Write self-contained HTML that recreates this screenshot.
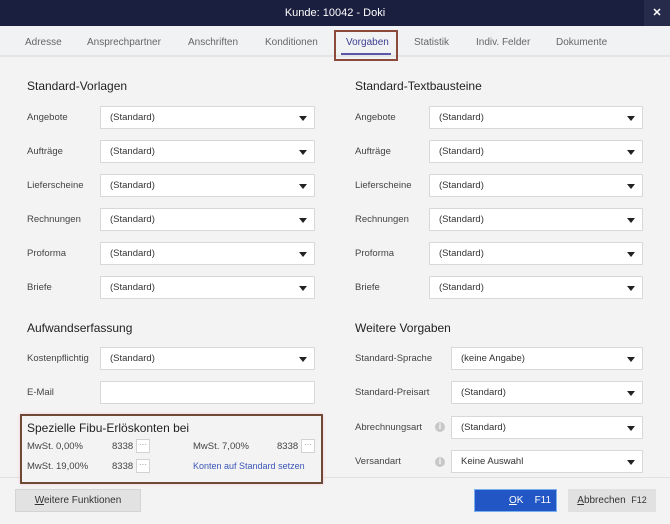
<!DOCTYPE html>
<html><head><meta charset="utf-8"><style>
*{box-sizing:border-box;margin:0;padding:0}
body{width:670px;height:524px;overflow:hidden;background:#f3f3f3;font-family:"Liberation Sans",sans-serif;font-size:10px;color:#333;position:relative}
.a{position:absolute;white-space:nowrap}
.title{left:0;top:0;width:670px;height:26px;background:#1b1f3f;color:#fff;font-size:11px;text-align:center;line-height:26px}
.x{right:0;top:0;width:26px;height:26px;background:#262b4c;color:#fff;text-align:center;line-height:26px;font-size:11px;font-weight:bold}
.tabs{left:0;top:26px;width:670px;height:31px;background:#f1f2f3;border-bottom:2px solid #e3e5e6}
.tab{top:37px;font-size:10px;color:#666}
.h{font-size:12px;color:#222}
.lbl{font-size:9.5px;color:#444}
.sel{height:23px;background:#fff;border:1px solid #d8d8d8;font-size:9.5px;color:#333;padding-left:9px;line-height:21px}
.sel:after{content:"";position:absolute;right:7px;top:9px;border-left:4px solid transparent;border-right:4px solid transparent;border-top:5px solid #222}
.info{width:10px;height:10px;border-radius:50%;background:#c8c8c8;color:#fff;font-size:8px;text-align:center;line-height:10px;font-weight:bold}
.dots{width:14px;height:14px;background:#fff;border:1px solid #d3d3d3;font-size:8px;color:#888;text-align:center;line-height:9px}
.foot{left:0;top:477px;width:670px;height:47px;background:#f3f3f3;border-top:1px solid #e0e0e0}
</style></head><body>
<div class="a title">Kunde: 10042 - Doki</div>
<div class="a x">✕</div>
<div class="a tabs"></div>
<div class="a tab" style="left:25px">Adresse</div>
<div class="a tab" style="left:87px">Ansprechpartner</div>
<div class="a tab" style="left:188px">Anschriften</div>
<div class="a tab" style="left:265px">Konditionen</div>
<div class="a tab" style="left:346px;color:#3b3f8f">Vorgaben</div>
<div class="a" style="left:341px;top:53px;width:50px;height:2px;background:#5a56a8"></div>
<div class="a" style="left:334px;top:30px;width:64px;height:31px;border:2px solid #8b4a3a"></div>
<div class="a tab" style="left:414px">Statistik</div>
<div class="a tab" style="left:476px">Indiv. Felder</div>
<div class="a tab" style="left:556px">Dokumente</div>

<div class="a h" style="left:27px;top:79px">Standard-Vorlagen</div>
<div class="a h" style="left:355px;top:79px">Standard-Textbausteine</div>

<div class="a lbl" style="left:27px;top:112px">Angebote</div><div class="a sel" style="left:100px;top:106px;width:215px">(Standard)</div>
<div class="a lbl" style="left:27px;top:146px">Aufträge</div><div class="a sel" style="left:100px;top:140px;width:215px">(Standard)</div>
<div class="a lbl" style="left:27px;top:180px">Lieferscheine</div><div class="a sel" style="left:100px;top:174px;width:215px">(Standard)</div>
<div class="a lbl" style="left:27px;top:214px">Rechnungen</div><div class="a sel" style="left:100px;top:208px;width:215px">(Standard)</div>
<div class="a lbl" style="left:27px;top:248px">Proforma</div><div class="a sel" style="left:100px;top:242px;width:215px">(Standard)</div>
<div class="a lbl" style="left:27px;top:282px">Briefe</div><div class="a sel" style="left:100px;top:276px;width:215px">(Standard)</div>

<div class="a lbl" style="left:355px;top:112px">Angebote</div><div class="a sel" style="left:429px;top:106px;width:214px">(Standard)</div>
<div class="a lbl" style="left:355px;top:146px">Aufträge</div><div class="a sel" style="left:429px;top:140px;width:214px">(Standard)</div>
<div class="a lbl" style="left:355px;top:180px">Lieferscheine</div><div class="a sel" style="left:429px;top:174px;width:214px">(Standard)</div>
<div class="a lbl" style="left:355px;top:214px">Rechnungen</div><div class="a sel" style="left:429px;top:208px;width:214px">(Standard)</div>
<div class="a lbl" style="left:355px;top:248px">Proforma</div><div class="a sel" style="left:429px;top:242px;width:214px">(Standard)</div>
<div class="a lbl" style="left:355px;top:282px">Briefe</div><div class="a sel" style="left:429px;top:276px;width:214px">(Standard)</div>

<div class="a h" style="left:27px;top:321px">Aufwandserfassung</div>
<div class="a h" style="left:355px;top:321px">Weitere Vorgaben</div>
<div class="a lbl" style="left:27px;top:353px">Kostenpflichtig</div><div class="a sel" style="left:100px;top:347px;width:215px">(Standard)</div>
<div class="a lbl" style="left:27px;top:387px">E-Mail</div><div class="a sel" style="left:100px;top:381px;width:215px;padding:0"></div>
<style>.a.sel[style*="padding:0"]:after{display:none}</style>

<div class="a lbl" style="left:355px;top:353px">Standard-Sprache</div><div class="a sel" style="left:451px;top:347px;width:192px">(keine Angabe)</div>
<div class="a lbl" style="left:355px;top:387px">Standard-Preisart</div><div class="a sel" style="left:451px;top:381px;width:192px">(Standard)</div>
<div class="a lbl" style="left:355px;top:422px">Abrechnungsart</div><div class="a info" style="left:435px;top:422px">i</div><div class="a sel" style="left:451px;top:416px;width:192px">(Standard)</div>
<div class="a lbl" style="left:355px;top:456px">Versandart</div><div class="a info" style="left:435px;top:457px">i</div><div class="a sel" style="left:451px;top:450px;width:192px">Keine Auswahl</div>

<div class="a foot"></div>
<div class="a" style="left:20px;top:414px;width:303px;height:70px;border:2px solid #6e4a36;background:#f3f3f3;box-shadow:0 0 3px #f6c8d8"></div>
<div class="a h" style="left:27px;top:421px">Spezielle Fibu-Erlöskonten bei</div>
<div class="a lbl" style="left:27px;top:441px">MwSt. 0,00%</div><div class="a lbl" style="left:112px;top:441px">8338</div><div class="a dots" style="left:136px;top:439px">···</div>
<div class="a lbl" style="left:193px;top:441px">MwSt. 7,00%</div><div class="a lbl" style="left:277px;top:441px">8338</div><div class="a dots" style="left:301px;top:439px">···</div>
<div class="a lbl" style="left:27px;top:461px">MwSt. 19,00%</div><div class="a lbl" style="left:112px;top:461px">8338</div><div class="a dots" style="left:136px;top:459px">···</div>
<div class="a lbl" style="left:193px;top:461px;color:#3b55b8;font-size:9px">Konten auf Standard setzen</div>

<div class="a" style="left:15px;top:489px;width:126px;height:23px;background:#e2e2e2;border:1px solid #d4d4d4;font-size:10px;text-align:center;line-height:21px;color:#333"><u>W</u>eitere Funktionen</div>
<div class="a" style="left:474px;top:489px;width:83px;height:23px;background:#2356c5;border:1px solid #7ab0f0;color:#fff;font-size:10px;line-height:21px;padding-left:34px"><u>O</u>K &nbsp;&nbsp;&nbsp;F11</div>
<div class="a" style="left:568px;top:489px;width:88px;height:23px;background:#e1e1e1;font-size:10px;line-height:23px;text-align:center;color:#333"><u>A</u>bbrechen &nbsp;<span style="font-size:9px">F12</span></div>
</body></html>
